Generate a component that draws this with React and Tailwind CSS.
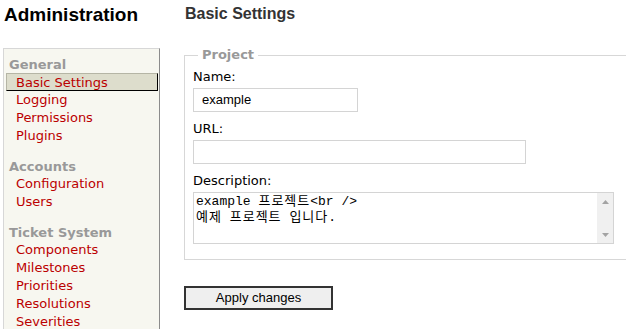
const groups = [
  { title: 'General', items: ['Basic Settings', 'Logging', 'Permissions', 'Plugins'] },
  { title: 'Accounts', items: ['Configuration', 'Users'] },
  { title: 'Ticket System', items: ['Components', 'Milestones', 'Priorities', 'Resolutions', 'Severities'] },
];

function Sidebar() {
  return (
    <div className="w-[157px] border border-[#d7d7d7] border-r-[#8c8c8c] bg-[#f7f7f0] pt-[8px] pb-[40px] font-['DejaVu_Sans',sans-serif] text-[13px]">
      {groups.map((group, i) => (
        <div key={group.title} className={i > 0 ? 'mt-[14px]' : ''}>
          <div className="pl-[5px] h-[16px] leading-[16px] font-bold text-[#999]">{group.title}</div>
          <ul className="ml-[2px] mr-[1px]">
            {group.items.map((item) => {
              const active = item === 'Basic Settings';
              return (
                <li
                  key={item}
                  className={`h-[18px] leading-[18px] text-[#bb0000] ${
                    active
                      ? 'bg-[#ddddcc] border border-[#b5b5a5] border-r-black border-b-black pl-[9px] leading-[16px]'
                      : 'pl-[10px]'
                  }`}
                >
                  {item}
                </li>
              );
            })}
          </ul>
        </div>
      ))}
    </div>
  );
}

function Field({ label, children }) {
  return (
    <div>
      <div className="h-[16px] leading-[16px] mb-[3px] font-['DejaVu_Sans',sans-serif] text-[13px] text-black">{label}</div>
      {children}
    </div>
  );
}

function Arrow({ up }) {
  return (
    <svg width="7" height="4" viewBox="0 0 7 4">
      <path d={up ? 'M0 4 L3.5 0 L7 4 Z' : 'M0 0 L3.5 4 L7 0 Z'} fill="#a3a3a3" />
    </svg>
  );
}

function Ko({ children }) {
  return <span className="tracking-[1px]">{children}</span>;
}

export default function App() {
  return (
    <div className="w-[626px] h-[329px] overflow-hidden bg-white flex pl-[3px]">
      <div className="w-[157px] shrink-0">
        <h1 className="mt-[3px] h-[24px] leading-[24px] pl-px font-['Liberation_Sans',Arial,sans-serif] font-bold text-[19px] text-black">
          Administration
        </h1>
        <div className="mt-[21px]">
          <Sidebar />
        </div>
      </div>

      <div className="ml-[24px] shrink-0">
        <h2 className="mt-[4px] h-[20px] leading-[20px] pl-px font-['Liberation_Sans',Arial,sans-serif] font-bold text-[16px] text-[#333]">
          Basic Settings
        </h2>

        <fieldset className="mt-[23px] w-[470px] border border-[#d7d7d7] pl-[8px] pt-[6px] pb-[15px]">
          <legend className="ml-[5px] px-[4px] h-[16px] leading-[16px] font-['DejaVu_Sans',sans-serif] font-bold text-[13px] text-[#999]">
            Project
          </legend>
          <div className="flex flex-col gap-[9px]">
            <Field label="Name:">
              <div className="w-[165px] h-[24px] border border-[#d4d4d4] pl-[8px] leading-[22px] font-['Liberation_Sans',Arial,sans-serif] text-[13px] text-black">
                example
              </div>
            </Field>
            <Field label="URL:">
              <div className="w-[333px] h-[24px] border border-[#d4d4d4]" />
            </Field>
            <Field label="Description:">
              <div className="w-[421px] h-[52px] border border-[#d4d4d4] flex">
                <div className="flex-1 pl-[2px] pt-[1px] leading-[16px] font-['Liberation_Mono','Noto_Sans_CJK_KR',monospace] text-[13px] text-black whitespace-pre">
                  <div>example <Ko>프로젝트</Ko>{'<br />'}</div>
                  <div><Ko>예제</Ko> <Ko>프로젝트</Ko> <Ko>입니다</Ko>.</div>
                </div>
                <div className="w-[16px] bg-[#f0f0f0] flex flex-col items-center justify-between pt-[7px] pb-[6px]">
                  <Arrow up />
                  <Arrow />
                </div>
              </div>
            </Field>
          </div>
        </fieldset>

        <button className="mt-[26px] w-[149px] h-[24px] border-2 border-[#333] bg-[#efefef] font-['Liberation_Sans',Arial,sans-serif] text-[13px] text-black leading-[20px]">
          Apply changes
        </button>
      </div>
    </div>
  );
}
